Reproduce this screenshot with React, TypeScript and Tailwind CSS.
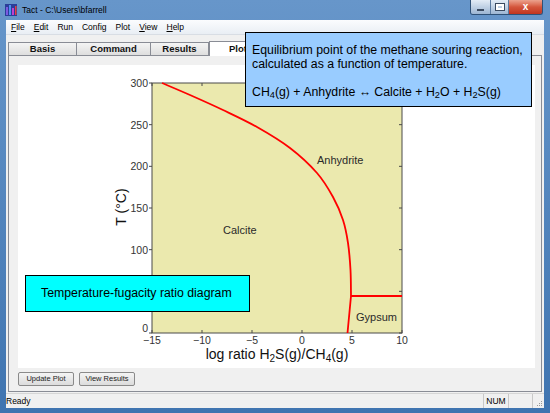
import React from 'react';

type Pt = [number, number];

// boundary between calcite and anhydrite, in page pixels
const boundary: Pt[] = [
  [162, 83], [190, 95], [223, 110], [257, 127], [290, 148], [317, 173],
  [333, 197], [343, 220], [348, 243], [350.5, 270], [351, 296],
];

function smooth(pts: Pt[]) {
  let d = `M${pts[0][0]},${pts[0][1]}`;
  for (let i = 0; i < pts.length - 1; i++) {
    const p0 = pts[i - 1] || pts[i];
    const p1 = pts[i];
    const p2 = pts[i + 1];
    const p3 = pts[i + 2] || p2;
    const c1x = p1[0] + (p2[0] - p0[0]) / 6;
    const c1y = p1[1] + (p2[1] - p0[1]) / 6;
    const c2x = p2[0] - (p3[0] - p1[0]) / 6;
    const c2y = p2[1] - (p3[1] - p1[1]) / 6;
    d += ` C${c1x},${c1y} ${c2x},${c2y} ${p2[0]},${p2[1]}`;
  }
  return d;
}

const xTicks = [-15, -10, -5, 0, 5, 10];
const yTicks = [0, 50, 100, 150, 200, 250, 300];
const px = (v: number) => 152 + (v + 15) * 10;
const py = (v: number) => 333 - (v * 250) / 300;

const Plot = () => (
  <svg width={517} height={303} viewBox="18 65 517 303" className="block">
    <rect x={152} y={83} width={250} height={250} fill="#ebe9ae" stroke="#4a4a4a" strokeWidth={1} />
    {xTicks.map((v) => (
      <g key={v}>
        <line x1={px(v)} y1={333} x2={px(v)} y2={330} stroke="#4a4a4a" />
        <line x1={px(v)} y1={83} x2={px(v)} y2={86} stroke="#4a4a4a" />
        <text x={px(v)} y={344} textAnchor="middle" fontSize={10.5} fill="#333">
          {v < 0 ? `\u2212${-v}` : v}
        </text>
      </g>
    ))}
    {yTicks.map((v) => (
      <g key={v}>
        <line x1={149} y1={py(v)} x2={152} y2={py(v)} stroke="#4a4a4a" />
        <line x1={402} y1={py(v)} x2={399} y2={py(v)} stroke="#4a4a4a" />
        {/* the 50 label sits under the cyan callout in the slide */}
        {v !== 50 && (
          <text x={148} y={v === 0 ? 332 : py(v) + 4} textAnchor="end" fontSize={10.5} fill="#333">
            {v}
          </text>
        )}
      </g>
    ))}
    <path d={smooth(boundary)} fill="none" stroke="#ff0000" strokeWidth={1.8} />
    <path d="M351,296 L402,296 M351,296 L347.5,333" fill="none" stroke="#ff0000" strokeWidth={1.8} />
    <text x={317} y={164} fontSize={11} fill="#2a2a2a">Anhydrite</text>
    <text x={223} y={234} fontSize={11} fill="#2a2a2a">Calcite</text>
    <text x={356} y={321} fontSize={11} fill="#2a2a2a">Gypsum</text>
    <text x={277} y={359} textAnchor="middle" fontSize={14} fill="#111">
      log ratio H<tspan fontSize={10} dy={3}>2</tspan>
      <tspan dy={-3}>S(g)/CH</tspan>
      <tspan fontSize={10} dy={3}>4</tspan>
      <tspan dy={-3}>(g)</tspan>
    </text>
    <text
      x={121}
      y={207}
      transform="rotate(-90 121 207)"
      textAnchor="middle"
      dominantBaseline="central"
      fontSize={14}
      fill="#111"
    >
      T (°C)
    </text>
  </svg>
);

const Tab = ({ label, w }: { label: string; w: string }) => (
  <div
    className={`${w} h-[13px] -mr-px flex items-center justify-center border border-b-0 border-[#898c95] bg-linear-to-b from-[#f4f4f4] to-[#dedede] text-[9.5px] font-bold text-[#111]`}
  >
    {label}
  </div>
);

const Button = ({ label, w }: { label: string; w: string }) => (
  <button
    className={`${w} h-[14px] rounded-[2px] border border-[#8a8a8a] bg-linear-to-b from-[#f4f4f4] to-[#dcdcdc] text-[7.5px] text-[#222] leading-none`}
  >
    {label}
  </button>
);

export default function App() {
  return (
    <div className="relative w-[550px] h-[413px] overflow-hidden bg-linear-to-b from-[#6796ca] to-[#3f74b0] font-['Liberation_Sans',Arial,sans-serif] text-black">
      {/* Title bar */}
      <div className="h-[20px] flex items-start">
        <svg width={12} height={12} viewBox="0 0 12 12" className="mt-[4px] ml-[5px]">
          <rect x={0} y={0} width={12} height={12} fill="#2b3f9a" />
          <rect x={1} y={3} width={2} height={8} fill="#7b5be0" />
          <rect x={4} y={1} width={2} height={10} fill="#4d8ff0" />
          <rect x={7} y={4} width={2} height={7} fill="#c03fd0" />
          <rect x={10} y={2} width={1.5} height={9} fill="#e04040" />
        </svg>
        <span className="ml-[5px] mt-[5px] text-[8.5px] leading-[10px]">Tact - C:\Users\bfarrell</span>
        <div className="ml-auto mr-[7px] flex rounded-b-[3px] border border-t-0 border-[#2f5177] overflow-hidden">
          <div className="w-[20px] h-[14px] flex items-center justify-center bg-linear-to-b from-[#e3ecf6] to-[#9db6d3] border-r border-[#5a7aa0]">
            <div className="w-[7px] h-[2px] bg-white border border-[#3a4a60] mt-[5px]" />
          </div>
          <div className="w-[18px] h-[14px] flex items-center justify-center bg-linear-to-b from-[#e3ecf6] to-[#9db6d3] border-r border-[#5a7aa0]">
            <div className="w-[8px] h-[6px] border-2 border-white outline outline-[#3a4a60]" />
          </div>
          <div className="w-[33px] h-[14px] flex items-center justify-center bg-linear-to-b from-[#eba28e] via-[#d4553c] to-[#c0341f]">
            <span className="text-white font-bold text-[10px] leading-none">x</span>
          </div>
        </div>
      </div>

      {/* Client area */}
      <div className="mx-[6px] h-[388px] flex flex-col bg-[#f0f0f0]">
        {/* Menu bar */}
        <div className="h-[15px] flex items-center gap-[9px] pl-[5px] text-[8.5px] bg-linear-to-b from-[#fbfcfe] to-[#e9eef4] border-b border-[#d8dde4]">
          <span><span className="underline">F</span>ile</span>
          <span><span className="underline">E</span>dit</span>
          <span>Run</span>
          <span>Config</span>
          <span>Plot</span>
          <span><span className="underline">V</span>iew</span>
          <span><span className="underline">H</span>elp</span>
        </div>

        {/* Tabs */}
        <div className="px-[2px] pt-[5px]">
          <div className="h-[15px] flex items-end">
            <Tab label="Basis" w="w-[69px]" />
            <Tab label="Command" w="w-[75px]" />
            <Tab label="Results" w="w-[59px]" />
            <div className="relative z-10 w-[58px] h-[15px] -mb-px ml-[1px] flex items-center justify-center border border-b-0 border-[#898c95] bg-white text-[9.5px] font-bold text-[#111]">
              Plot
            </div>
          </div>
          <div className="h-[337px] border border-[#898c95] bg-[#f0f0f0] pl-[9px] pt-[9px] flex flex-col">
            <div className="w-[517px] h-[303px] bg-white">
              <Plot />
            </div>
            <div className="mt-[4px] flex gap-[5px]">
              <Button label="Update Plot" w="w-[56px]" />
              <Button label="View Results" w="w-[56px]" />
            </div>
          </div>
        </div>

        {/* Status bar */}
        <div className="mt-auto h-[15px] flex items-center border-t border-[#d6d6d6] text-[8.5px]">
          <span>Ready</span>
          <div className="ml-auto h-full flex">
            <div className="w-[25px] border-l border-[#c8c8c8] flex items-center justify-center">NUM</div>
            <div className="w-[24px] border-l border-[#c8c8c8]" />
            <div className="w-[12px] border-l border-[#c8c8c8] flex items-end justify-end p-[1px]">
              <svg width={8} height={8} viewBox="0 0 8 8">
                <rect x={6} y={2} width={1} height={1} fill="#999" />
                <rect x={4} y={4} width={1} height={1} fill="#999" />
                <rect x={6} y={4} width={1} height={1} fill="#999" />
                <rect x={2} y={6} width={1} height={1} fill="#999" />
                <rect x={4} y={6} width={1} height={1} fill="#999" />
                <rect x={6} y={6} width={1} height={1} fill="#999" />
              </svg>
            </div>
          </div>
        </div>
      </div>

      {/* Callouts */}
      <div className="absolute z-20 left-[245px] top-[32px] w-[287px] h-[75px] bg-[#99ccff] border-[1.5px] border-black pl-[6px] pt-[10px] text-[12.3px] leading-[14px]">
        <div>Equilibrium point of the methane souring reaction,</div>
        <div>calculated as a function of temperature.</div>
        <div className="h-[14px]" />
        <div>
          CH<sub>4</sub>(g) + Anhydrite ↔ Calcite + H<sub>2</sub>O + H<sub>2</sub>S(g)
        </div>
      </div>
      <div className="absolute z-20 left-[25px] top-[275px] w-[225px] h-[37px] bg-[#00ffff] border border-black flex items-center pl-[15px] text-[12.3px]">
        Temperature-fugacity ratio diagram
      </div>
    </div>
  );
}
